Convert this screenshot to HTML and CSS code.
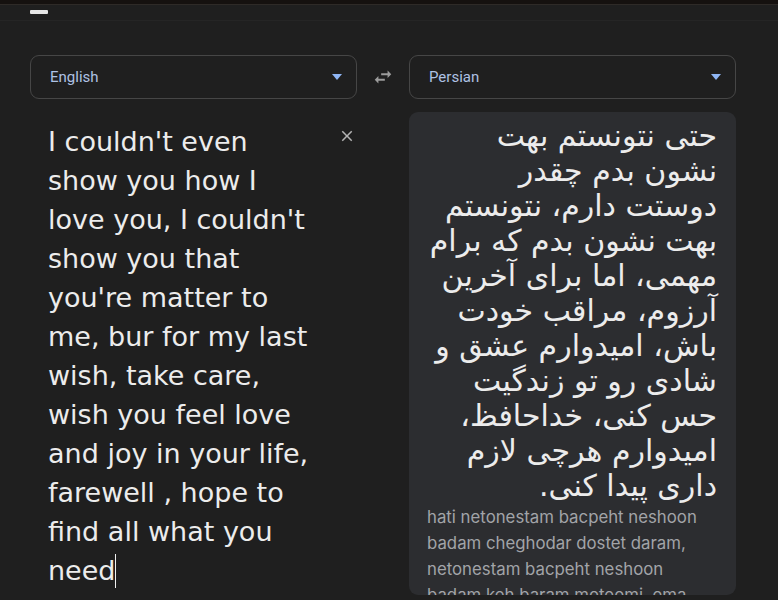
FILE: index.html
```html
<!DOCTYPE html>
<html>
<head>
    <link rel="stylesheet" href="styles.css">
</head>
<body>
    <div class="topbar"></div>
    <div class="tabline"><span class="tab-mark"></span></div>

    <div class="translator">
        <div class="column">
            <div class="lang-select">
                <span>English</span>
                <span class="caret"></span>
            </div>
            <div class="source">
                <div class="source-text">I couldn't even<br>show you how I<br>love you, I couldn't<br>show you that<br>you're matter to<br>me, bur for my last<br>wish, take care,<br>wish you feel love<br>and joy in your life,<br>farewell , hope to<br>find all what you<br>need<span class="cursor"></span></div>
                <svg class="clear" width="18" height="18" viewBox="0 0 24 24">
                    <path d="M19 6.41L17.59 5 12 10.59 6.41 5 5 6.41 10.59 12 5 17.59 6.41 19 12 13.41 17.59 19 19 17.59 13.41 12z"/>
                </svg>
            </div>
        </div>

        <div class="swap">
            <svg width="22" height="22" viewBox="0 0 24 24">
                <path d="M6.99 11L3 15l3.99 4v-3H14v-2H6.99v-3zM21 9l-4-4v3h-7v2h7v3l4-4z"/>
            </svg>
        </div>

        <div class="column">
            <div class="lang-select">
                <span>Persian</span>
                <span class="caret"></span>
            </div>
            <div class="result">
                <div class="result-text" dir="rtl">حتی نتونستم بهت<br>نشون بدم چقدر<br>دوستت دارم، نتونستم<br>بهت نشون بدم که برام<br>مهمی، اما برای آخرین<br>آرزوم، مراقب خودت<br>باش، امیدوارم عشق و<br>شادی رو تو زندگیت<br>حس کنی، خداحافظ،<br>امیدوارم هرچی لازم<br>داری پیدا کنی.</div>
                <div class="translit">hati netonestam bacpeht neshoon<br>badam cheghodar dostet daram,<br>netonestam bacpeht neshoon<br>badam keh baram moteomi, ema</div>
            </div>
        </div>
    </div>
</body>
</html>
```

FILE: styles.css
```css
body {
    margin: 0;
    background: #1f1f1f;
    font-family: Roboto, "Noto Sans", sans-serif;
    height: 600px;
    overflow: hidden;
}

.topbar {
    height: 4px;
    background: #15110f;
    border-bottom: 1px solid #2e2a27;
}

.tabline {
    height: 10px;
    padding-left: 30px;
    border-bottom: 1px solid #252525;
}

.tab-mark {
    display: block;
    width: 18px;
    height: 4px;
    margin-top: 5px;
    background: #e6e6e6;
    border-radius: 1px;
}

.translator {
    display: flex;
    padding: 34px 0 0 30px;
}

.column {
    width: 327px;
    display: flex;
    flex-direction: column;
}

.lang-select {
    height: 42px;
    border: 1px solid #464646;
    border-radius: 9px;
    display: flex;
    align-items: center;
    justify-content: space-between;
    padding: 0 14px 0 19px;
    color: #aec2e4;
    font-size: 15px;
}

.caret {
    width: 0;
    height: 0;
    border-left: 5px solid transparent;
    border-right: 5px solid transparent;
    border-top: 6px solid #8fb6f5;
}

.swap {
    width: 52px;
    height: 44px;
    display: flex;
    align-items: center;
    justify-content: center;
}

.swap svg {
    fill: #9c9c9c;
}

.source {
    display: flex;
    justify-content: space-between;
    padding: 23px 0 0 18px;
}

.source-text {
    color: #ececec;
    font-family: "DejaVu Sans", sans-serif;
    font-size: 27px;
    line-height: 39px;
}

.cursor {
    display: inline-block;
    width: 1px;
    height: 34px;
    background: #f0f0f0;
    vertical-align: -8px;
}

.clear {
    fill: #b4b4b4;
    margin: 5px 1px 0 0;
    flex: none;
}

.result {
    margin-top: 13px;
    background: #2c2d30;
    border-radius: 9px;
    height: 483px;
    box-sizing: border-box;
    overflow: hidden;
    padding: 6px 19px 0 18px;
}

.result-text {
    color: #ececec;
    font-family: "DejaVu Sans", sans-serif;
    font-size: 30px;
    line-height: 35px;
    text-align: right;
}

.translit {
    color: #a2a4a8;
    font-family: Inter, sans-serif;
    font-size: 16.8px;
    line-height: 26px;
    margin-top: 1px;
}
```
